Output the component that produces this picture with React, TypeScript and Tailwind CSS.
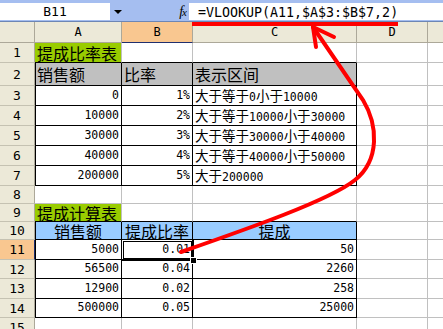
import React from "react";

const ASC = "font-['DejaVu_Sans_Mono',monospace] text-[11.5px]";
const CJK16 = "font-['Noto_Sans_CJK_SC',sans-serif] text-[16px]";
const CJK13 = "font-['Noto_Sans_CJK_SC',sans-serif] text-[13.5px]";

function Mix({ t, cjk }: { t: string; cjk: string }) {
  const parts = t.match(/[\x00-\x7f]+|[^\x00-\x7f]+/g) || [];
  return (
    <>
      {parts.map((s, i) =>
        /^[\x00-\x7f]+$/.test(s) ? (
          <span key={i} className={ASC}>
            {s}
          </span>
        ) : (
          <span key={i} className={cjk}>
            {s}
          </span>
        )
      )}
    </>
  );
}

type Cell = {
  t?: string;
  bg?: string;
  al?: "l" | "r" | "c";
  kind?: "big" | "num" | "mix";
  br?: boolean;
  bb?: boolean;
  bl?: boolean;
};

type Row = { n: number; h: string; sel?: boolean; cells: [Cell, Cell, Cell] };

const G = "bg-[#99cc00]";
const GR = "bg-[#c0c0c0]";
const BL = "bg-[#99ccff]";

const tb = (t: string, kind: Cell["kind"], al: Cell["al"], extra: Partial<Cell> = {}): Cell => ({
  t,
  kind,
  al,
  br: true,
  bb: true,
  ...extra,
});

const rows: Row[] = [
  {
    n: 1,
    h: "h-[20px]",
    cells: [
      { t: "提成比率表", kind: "big", al: "l", bg: G, bb: true },
      { bb: true },
      { bb: true },
    ],
  },
  {
    n: 2,
    h: "h-[23px]",
    cells: [
      tb("销售额", "big", "l", { bg: GR, bl: true }),
      tb("比率", "big", "l", { bg: GR }),
      tb("表示区间", "big", "l", { bg: GR }),
    ],
  },
  {
    n: 3,
    h: "h-[20px]",
    cells: [tb("0", "num", "r", { bl: true }), tb("1%", "num", "r"), tb("大于等于0小于10000", "mix", "l")],
  },
  {
    n: 4,
    h: "h-[20px]",
    cells: [tb("10000", "num", "r", { bl: true }), tb("2%", "num", "r"), tb("大于等于10000小于30000", "mix", "l")],
  },
  {
    n: 5,
    h: "h-[20px]",
    cells: [tb("30000", "num", "r", { bl: true }), tb("3%", "num", "r"), tb("大于等于30000小于40000", "mix", "l")],
  },
  {
    n: 6,
    h: "h-[20px]",
    cells: [tb("40000", "num", "r", { bl: true }), tb("4%", "num", "r"), tb("大于等于40000小于50000", "mix", "l")],
  },
  {
    n: 7,
    h: "h-[20px]",
    cells: [tb("200000", "num", "r", { bl: true }), tb("5%", "num", "r"), tb("大于200000", "mix", "l")],
  },
  { n: 8, h: "h-[18px]", cells: [{}, {}, {}] },
  {
    n: 9,
    h: "h-[18px]",
    cells: [{ t: "提成计算表", kind: "big", al: "l", bg: G, bb: true }, { bb: true }, { bb: true }],
  },
  {
    n: 10,
    h: "h-[18px]",
    cells: [
      tb("销售额", "big", "c", { bg: BL, bl: true }),
      tb("提成比率", "big", "c", { bg: BL }),
      tb("提成", "big", "c", { bg: BL }),
    ],
  },
  {
    n: 11,
    h: "h-[20px]",
    sel: true,
    cells: [tb("5000", "num", "r", { bl: true }), tb("0.01", "num", "r"), tb("50", "num", "r")],
  },
  {
    n: 12,
    h: "h-[19px]",
    cells: [tb("56500", "num", "r", { bl: true }), tb("0.04", "num", "r"), tb("2260", "num", "r")],
  },
  {
    n: 13,
    h: "h-[20px]",
    cells: [tb("12900", "num", "r", { bl: true }), tb("0.02", "num", "r"), tb("258", "num", "r")],
  },
  {
    n: 14,
    h: "h-[19px]",
    cells: [tb("500000", "num", "r", { bl: true }), tb("0.05", "num", "r"), tb("25000", "num", "r")],
  },
  { n: 15, h: "h-[20px]", cells: [{}, {}, {}] },
];

const widths = ["w-[87px]", "w-[71px]", "w-[164px]"];

function CellView({ c, w }: { c: Cell; w: string }) {
  const cls = [
    w,
    "shrink-0 h-full border-r border-b flex items-center whitespace-nowrap overflow-visible",
    c.br ? "border-r-black" : "border-r-[#c0c0c0]",
    c.bb ? "border-b-black" : "border-b-[#c0c0c0]",
    c.bg ?? "bg-white",
    c.al === "r" ? "justify-end pr-[2px]" : c.al === "c" ? "justify-center" : "justify-start pl-[2px]",
    c.bl ? "shadow-[inset_1px_0_0_#000]" : "",
  ].join(" ");
  let content: React.ReactNode = null;
  if (c.t) {
    if (c.kind === "big") content = <span className={CJK16 + " leading-none"}>{c.t}</span>;
    else if (c.kind === "num") content = <span className={ASC + " leading-none"}>{c.t}</span>;
    else content = <span className="leading-none"><Mix t={c.t} cjk={CJK13} /></span>;
  }
  return <div className={cls}>{content}</div>;
}

export default function App() {
  return (
    <div className="relative w-[443px] h-[329px] overflow-hidden bg-white text-black">
      {/* formula bar */}
      <div className="flex h-[22px] bg-[#a5bef0] pt-[3px] pb-[1px] border-b border-[#6d86b5] border-t-0">
        <div className="w-[110px] bg-white flex items-center justify-center font-['DejaVu_Sans_Mono',monospace] text-[13px] leading-none">
          B11
        </div>
        <div className="w-[79px] flex items-center justify-between pl-[4px] pr-[3px]">
          <svg width="8" height="4" viewBox="0 0 8 4">
            <polygon points="0,0 8,0 4,4" fill="#000" />
          </svg>
          <span className="font-['Liberation_Serif',serif] italic text-[14px] leading-none tracking-[-1px]">
            f<span className="text-[11px]">x</span>
          </span>
        </div>
        <div className="flex-1 bg-white flex items-center pl-[9px] pt-[2px] font-['DejaVu_Sans_Mono',monospace] text-[13.3px] leading-none">
          =VLOOKUP(A11,$A$3:$B$7,2)
        </div>
      </div>

      {/* column headers */}
      <div className="flex h-[21px] bg-[#ece9d8] font-['DejaVu_Sans_Mono',monospace] text-[12px]">
        <div className="w-[35px] shrink-0 border-r border-b border-[#aca899]" />
        <div className="w-[87px] shrink-0 border-r border-b border-[#aca899] flex items-center justify-center">A</div>
        <div className="w-[71px] shrink-0 border-r border-[#aca899] border-b border-b-[#1f2f6f] bg-[#f9c790] flex items-center justify-center">
          B
        </div>
        <div className="w-[164px] shrink-0 border-r border-b border-[#aca899] flex items-center justify-center">C</div>
        <div className="w-[71px] shrink-0 border-r border-b border-[#aca899] flex items-center justify-center">D</div>
        <div className="flex-1 border-b border-[#aca899]" />
      </div>

      {/* rows */}
      {rows.map((r) => (
        <div key={r.n} className={"flex " + r.h}>
          <div
            className={
              "w-[35px] shrink-0 h-full border-b border-r flex items-center justify-center font-['DejaVu_Sans_Mono',monospace] text-[13px] leading-none " +
              (r.sel
                ? "bg-[#f9c790] border-r-[#1f2f6f] border-b-[#c5c2b2]"
                : "bg-[#ece9d8] border-r-[#aca899] border-b-[#c5c2b2]")
            }
          >
            {r.n}
          </div>
          {r.cells.map((c, i) => (
            <CellView key={i} c={c} w={widths[i]} />
          ))}
          <div className="w-[71px] shrink-0 h-full border-r border-b border-[#c0c0c0]" />
          <div className="flex-1 h-full border-b border-[#c0c0c0]" />
        </div>
      ))}

      {/* selection on B11 */}
      <div className="absolute left-[121px] top-[239px] w-[73px] h-[22px] border border-black">
        <div className="absolute inset-[1px] border border-black" />
      </div>
      <div className="absolute left-[190px] top-[257px] w-[7px] h-[7px] bg-black border border-white" />

      {/* red annotation */}
      <svg className="absolute left-0 top-0 pointer-events-none" width="443" height="329" viewBox="0 0 443 329">
        <path d="M192 24 L398 24" stroke="#ff0000" strokeWidth="4" fill="none" />
        <path
          d="M181 252 C 250 228, 330 200, 355 180 C 380 160, 378 125, 363 100 L 313 27"
          stroke="#ff0000"
          strokeWidth="4"
          fill="none"
          strokeLinecap="round"
        />
        <path d="M313 27 L334 37 M313 27 L316 47" stroke="#ff0000" strokeWidth="4" fill="none" strokeLinecap="round" />
      </svg>
    </div>
  );
}
